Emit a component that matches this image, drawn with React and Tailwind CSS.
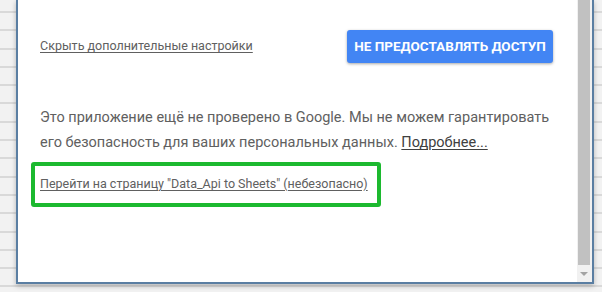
import React from "react";

const grid =
  "bg-[#f2f2f2] bg-[image:repeating-linear-gradient(to_bottom,transparent_0px,transparent_11px,#d9d9d9_11px,#d9d9d9_13px,transparent_13px,transparent_18.3px)]";

const App = () => {
  return (
    <div
      className={`relative flex h-[292px] w-[602px] overflow-hidden ${grid}`}
      style={{ fontFamily: "Roboto, 'Noto Sans', sans-serif" }}
    >
      <div className="ml-[16px] flex h-[284px] w-[578px] border-x-2 border-b-2 border-[#5a7ea2] bg-white shadow-[0_2px_5px_rgba(0,0,0,0.25)]">
        <div className="flex flex-1 flex-col pl-[22px] pr-[24px] pt-[30px]">
          <div className="flex items-center justify-between">
            <a className="text-[12.5px] text-[#606060] underline underline-offset-2">
              Скрыть дополнительные настройки
            </a>
            <button className="h-[33px] w-[206px] rounded-[3px] bg-[#4285f4] text-[13.5px] font-bold uppercase text-white shadow-[0_1px_3px_rgba(0,0,0,0.35)]">
              Не предоставлять доступ
            </button>
          </div>

          <p className="mt-[42px] text-[14.5px] leading-[25px] text-[#606060]">
            Это приложение ещё не проверено в Google. Мы не можем гарантировать
            <br />
            его безопасность для ваших персональных данных.{" "}
            <a className="text-[#404040] underline underline-offset-2">Подробнее...</a>
          </p>

          <div className="-ml-[9px] mt-[7px] flex h-[45px] w-[350px] items-center rounded-[3px] border-4 border-[#1cb92f] pl-[5px]">
            <a className="whitespace-nowrap text-[12.5px] text-[#606060] underline underline-offset-2">
              Перейти на страницу "Data_Api to Sheets" (небезопасно)
            </a>
          </div>
        </div>

        <div className="flex w-[15px] flex-col bg-[#f1f1f1] pl-[1px] pr-[2px]">
          <div className="h-[265px] bg-[#c1c1c1]" />
          <div className="flex flex-1 items-center justify-center">
            <div className="h-0 w-0 border-x-[4px] border-t-[4px] border-x-transparent border-t-[#a3a3a3]" />
          </div>
        </div>
      </div>
    </div>
  );
};

export default App;
